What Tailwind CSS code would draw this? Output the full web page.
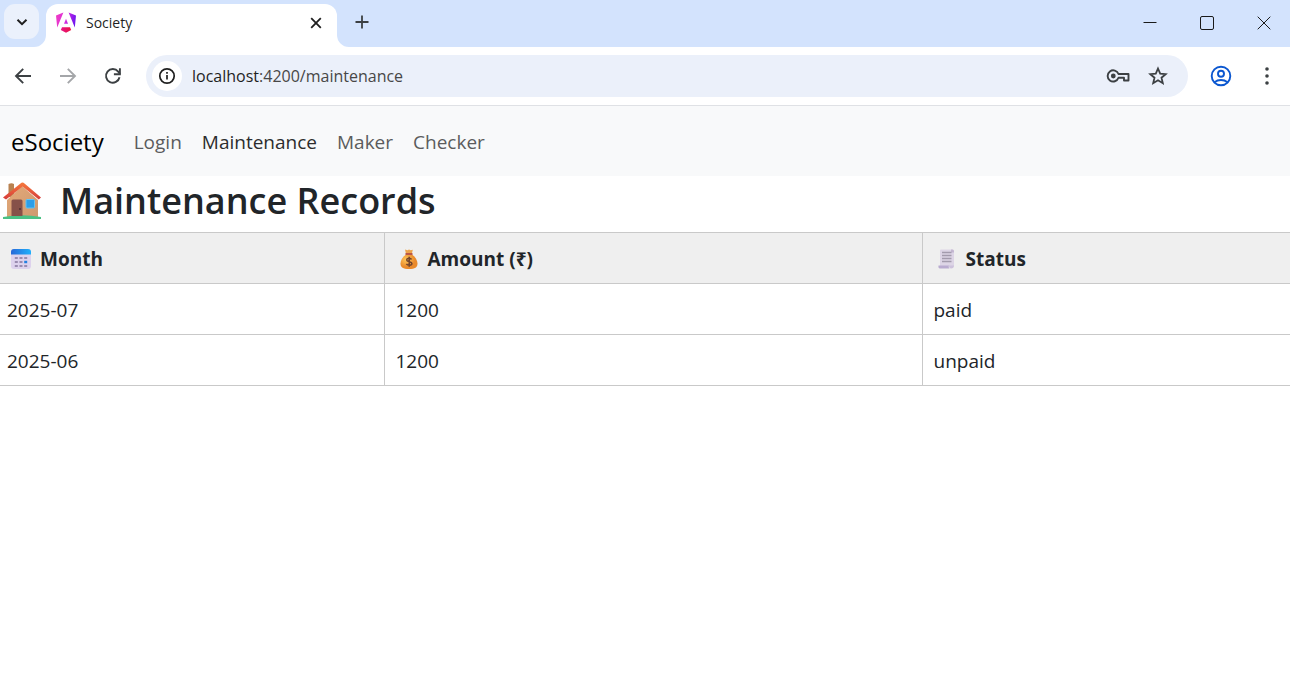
<!DOCTYPE html>
<html lang="en">
<head>
<meta charset="utf-8">
<title>Society</title>
<script src="https://cdn.jsdelivr.net/npm/@tailwindcss/browser@4"></script>
</head>
<body class="min-h-screen bg-white font-['Segoe_UI','Open_Sans','Noto_Sans',sans-serif] text-[19px] text-[#212529]">
<header>
  <div class="flex h-[47px] items-stretch bg-[#d3e3fd]">
    <div class="relative w-[46px] pl-1 pt-1">
      <button aria-label="Search tabs" class="flex size-[35px] items-center justify-center rounded-[11px] bg-[#ebf1fc]">
        <svg class="size-3" viewBox="0 0 12 12" fill="none" stroke="#1f1f1f" stroke-width="2"><path d="M1.500 3.800 6 8.200l4.500-4.400"/></svg>
      </button>
      <svg class="absolute bottom-0 right-0 size-3" viewBox="0 0 12 12"><path d="M12 0v12H0A12 12 0 0 0 12 0" fill="#fff"/></svg>
    </div>
    <div class="mt-1 flex w-[291px] items-center rounded-t-xl bg-white pb-[6px] pl-[9px] pr-[13px]">
      <svg class="h-[22px] w-[22px]" viewBox="0 0 22 22" aria-hidden="true">
        <defs>
          <linearGradient id="ng" gradientUnits="userSpaceOnUse" x1="1" y1="4" x2="21" y2="8"><stop offset="0" stop-color="#f03cc3"/><stop offset=".5" stop-color="#d62be0"/><stop offset="1" stop-color="#6a14f0"/></linearGradient>
          <linearGradient id="nb" x1="0" y1="0" x2="1" y2="0"><stop offset="0" stop-color="#e8128c"/><stop offset="1" stop-color="#e9163f"/></linearGradient>
        </defs>
        <path d="M8.400 .5 1 3.500l1.200 12zM13.600 .5 21 3.500l-1.200 12z" fill="url(#ng)"/>
        <path d="M11 6.800 9 11.800h4z" fill="url(#ng)"/>
        <path d="M7 15.300h8l1.200 2.700L11 20.800 5.800 18z" fill="url(#nb)"/>
      </svg>
      <span class="ml-[9px] flex-1 text-[14px] leading-5 text-[#1f1f1f]">Society</span>
      <button aria-label="Close tab" class="flex size-4 items-center justify-center">
        <svg class="size-3" viewBox="0 0 12 12" stroke="#1f1f1f" stroke-width="1.800"><path d="M1.200 1.200l9.600 9.600M10.800 1.200l-9.600 9.600"/></svg>
      </button>
    </div>
    <div class="relative flex w-10 items-center pb-[3px] pl-[18px]">
      <svg class="absolute bottom-0 left-0 size-3" viewBox="0 0 12 12"><path d="M0 0v12h12A12 12 0 0 1 0 0" fill="#fff"/></svg>
      <button aria-label="New tab"><svg class="block size-[14px]" viewBox="0 0 14 14" stroke="#3c4043" stroke-width="1.800"><path d="M7 .5v13M.5 7h13"/></svg></button>
    </div>
    <div class="ml-auto flex items-center gap-[43px] pb-[2px] pr-[19px]">
      <button aria-label="Minimize"><svg class="block size-[14px]" viewBox="0 0 14 14" stroke="#1a1a1a"><path d="M.5 6.500h13"/></svg></button>
      <button aria-label="Maximize"><svg class="block size-[14px]" viewBox="0 0 14 14" fill="none" stroke="#1a1a1a"><rect x=".5" y=".5" width="13" height="13" rx="1.500"/></svg></button>
      <button aria-label="Close"><svg class="block size-[14px]" viewBox="0 0 14 14" stroke="#1a1a1a"><path d="M.7.7l12.600 12.600M13.300.7.7 13.300"/></svg></button>
    </div>
  </div>
  <div class="flex h-[59px] items-center border-b border-[#dfe1e5] bg-white pl-[14px] pr-[14px]">
    <div class="flex items-center gap-[27px]">
      <button aria-label="Back"><svg class="block size-[18px]" viewBox="0 0 18 18" fill="none" stroke="#3c4043" stroke-width="1.900"><path d="M17 9H2.500M9.200 1.800 2 9l7.200 7.200"/></svg></button>
      <button aria-label="Forward"><svg class="block size-[18px]" viewBox="0 0 18 18" fill="none" stroke="#a4a6a9" stroke-width="1.900"><path d="M1 9h14.500M8.800 1.800 16 9l-7.200 7.200"/></svg></button>
      <button aria-label="Reload"><svg class="block size-[18px]" viewBox="0 0 18 18" fill="none" stroke="#3c4043" stroke-width="1.900"><path d="M15.500 10.200A6.800 6.800 0 1 1 14.200 4.700L16 7"/><path d="M15.900 1.300v6h-6"/></svg></button>
    </div>
    <div class="ml-6 flex h-[42px] flex-1 items-center rounded-full bg-[#ebf0fa] pl-[6px] pr-5">
      <button aria-label="Site information" class="flex size-[30px] items-center justify-center rounded-full bg-white">
        <svg class="size-[18px]" viewBox="0 0 18 18" fill="none" stroke="#1f1f1f" stroke-width="1.700"><circle cx="9" cy="9" r="7.200"/><path d="M9 8v4.500M9 5v1.800"/></svg>
      </button>
      <a href="#" class="ml-[10px] flex-1 text-[16px] leading-6 text-[#474747]"><span class="text-[#1f1f1f]">localhost</span>:4200/maintenance</a>
      <button aria-label="Passwords"><svg class="block h-4 w-6" viewBox="0 0 24 16" fill="none" stroke="#3c4043" stroke-width="1.900"><path d="M12.500 6h10v6.500h-4.500V9.800h-5.500A5.600 5.600 0 1 1 12.500 6z" stroke-linejoin="round"/><circle cx="7.300" cy="8" r="2.400" fill="#3c4043" stroke="none"/></svg></button>
      <button aria-label="Bookmark this tab" class="ml-[18px]"><svg class="block size-5" viewBox="0 0 20 20" fill="none" stroke="#3c4043" stroke-width="1.800"><path d="M10 2.500l2.200 5.100 5.500.5-4.200 3.600 1.300 5.500L10 14.300l-4.800 2.900 1.300-5.500L2.300 8.100l5.500-.5z"/></svg></button>
    </div>
    <button aria-label="Profile" class="ml-[22px]"><svg class="block size-[22px]" viewBox="0 0 22 22" fill="none" stroke="#0b57d0" stroke-width="1.900"><circle cx="11" cy="11" r="9.300"/><circle cx="11" cy="8.800" r="3"/><path d="M4.500 17.300c3.800-3 9.200-3 13 0"/></svg></button>
    <button aria-label="Browser menu" class="ml-[26px]"><svg class="block h-[18px] w-[18px]" viewBox="0 0 18 18" fill="#3c4043"><circle cx="9" cy="2" r="1.800"/><circle cx="9" cy="9" r="1.800"/><circle cx="9" cy="16" r="1.800"/></svg></button>
  </div>
</header>

<nav class="flex h-[70px] items-center bg-[#f8f9fa] pl-[11px] pt-[2px]">
  <a href="#" class="mr-[30px] text-[24px] text-black">eSociety</a>
  <div class="flex gap-5 text-[#5b5c5d]">
    <a href="#">Login</a>
    <a href="#" class="text-[#2c2d2d]">Maintenance</a>
    <a href="#">Maker</a>
    <a href="#">Checker</a>
  </div>
</nav>

<main class="overflow-hidden">
  <h1 class="flex h-14 items-center gap-[18px] pb-[6px] pl-[2px] text-[36px] font-semibold">
    <svg class="size-10" viewBox="0 0 40 40" aria-hidden="true">
      <defs>
        <linearGradient id="wall" x1="0" y1="0" x2="1" y2="1"><stop offset="0" stop-color="#e3a878"/><stop offset="1" stop-color="#cf9a70"/></linearGradient>
        <linearGradient id="roof" x1="0" y1="0" x2="0" y2="1"><stop offset="0" stop-color="#f67a3c"/><stop offset="1" stop-color="#d63b3a"/></linearGradient>
      </defs>
      <path d="M6.500 3q3-1.500 5.500 0v13H6.500z" fill="#b98250"/>
      <path d="M20 5 5 19v17h31V19z" fill="url(#wall)"/>
      <path d="M1 36q19-3.500 38 0v2H1z" fill="#4bc184"/>
      <path d="M20.500 1.500q1 0 2 1L39 16.500 36.800 18.500 20.500 5.500 4 18.500 1 16.500 18.500 2.500q1-1 2-1" fill="url(#roof)"/>
      <path d="M9.500 35V20q0-1.500 1.500-1.500h8q1.500 0 1.500 1.500v15z" fill="#865149"/>
      <circle cx="18" cy="28" r="1" fill="#4d2e31"/>
      <rect x="24" y="18.500" width="8.500" height="8.500" rx="1" fill="#2d9ee8" stroke="#63c3f3"/>
    </svg>
    Maintenance Records
  </h1>
  <table class="w-[calc(100%+10px)] table-fixed border-collapse text-left">
    <colgroup><col class="w-[384px]"><col class="w-[538px]"><col></colgroup>
    <thead class="bg-[#efefef]">
      <tr class="h-[51px] border-y border-[#c9c9c9]">
        <th class="border-r border-[#c9c9c9] pl-[10px] pt-[2px]"><span class="flex items-center gap-2">
          <svg class="size-[22px]" viewBox="0 0 22 22" aria-hidden="true">
            <defs><linearGradient id="cal" x1="0" x2="1"><stop offset="0" stop-color="#2768d8"/><stop offset="1" stop-color="#20b0fb"/></linearGradient></defs>
            <rect x="1" y="1" width="20" height="20" rx="3" fill="#ddd2ed"/>
            <path d="M1 6.500V4q0-3 3-3h14q3 0 3 3v2.500z" fill="url(#cal)"/>
            <path d="M4.800 10h3M9.500 10h3M14.200 10h3M4.800 14h3M9.500 14h3M4.800 18h3M9.500 18h3M14.200 18h3" stroke="#9a8cb0" stroke-width="2"/><path d="M14.200 14h3" stroke="#2380e0" stroke-width="2.400"/>
          </svg>Month</span></th>
        <th class="border-r border-[#c9c9c9] pl-[13px] pt-[2px]"><span class="flex items-center gap-2">
          <svg class="size-[22px]" viewBox="0 0 22 22" aria-hidden="true">
            <defs><radialGradient id="bag" cx=".35" cy=".35"><stop offset="0" stop-color="#ffc85a"/><stop offset="1" stop-color="#e98a2b"/></radialGradient></defs>
            <path d="M7 1.500l2.500.8L11 1.600l1.800.7 2-.6-1 4.300H8z" fill="#eda34c"/>
            <path d="M8 6.500h6c3.500 2.500 5.500 6 5.500 9 0 4-2.500 5.500-8.500 5.500s-8.500-1.500-8.500-5.500c0-3 2-6.500 5.500-9" fill="url(#bag)"/>
            <path d="M7.500 6h7" stroke="#b64f40" stroke-width="1.800"/>
            <path d="M13.500 11.500c-1-1.800-4.800-1.500-4.800.5 0 2.300 5.200 1.200 5.200 3.500 0 2.200-4.300 2.300-5.500.3M11.200 8.800v10" fill="none" stroke="#75452c" stroke-width="1.600"/>
          </svg>Amount (₹)</span></th>
        <th class="pl-[13px] pt-[2px]"><span class="flex items-center gap-2">
          <svg class="size-[22px]" viewBox="0 0 22 22" aria-hidden="true">
            <path d="M4 2.500q0-1 1-1h11q2 0 2 2v14.500H4z" fill="#ddd5e6"/>
            <path d="M15 1.500h1.500q1.500 0 1.500 2v1h-3z" fill="#c3b6d1"/>
            <path d="M2.500 17.500H13q-1 1.500.5 3H4q-2 0-1.500-3" fill="#b9abd0"/>
            <path d="M13 17.500h5q0 3-3 3-2 0-2-3" fill="#cdc2dc"/>
            <path d="M6 4.500h9.500M6 7.500h9.500M6 10.500h9.500M6 13.500h9.500" stroke="#a39bad" stroke-width="1.300"/>
          </svg>Status</span></th>
      </tr>
    </thead>
    <tbody>
      <tr class="h-[51px] border-b border-[#c9c9c9]"><td class="border-r border-[#c9c9c9] pl-[7px] pt-[2px]">2025-07</td><td class="border-r border-[#c9c9c9] pl-[11px] pt-[2px]">1200</td><td class="pl-[11px] pt-[2px]">paid</td></tr>
      <tr class="h-[51px] border-b border-[#c9c9c9]"><td class="border-r border-[#c9c9c9] pl-[7px] pt-[2px]">2025-06</td><td class="border-r border-[#c9c9c9] pl-[11px] pt-[2px]">1200</td><td class="pl-[11px] pt-[2px]">unpaid</td></tr>
    </tbody>
  </table>
</main>
</body>
</html>
